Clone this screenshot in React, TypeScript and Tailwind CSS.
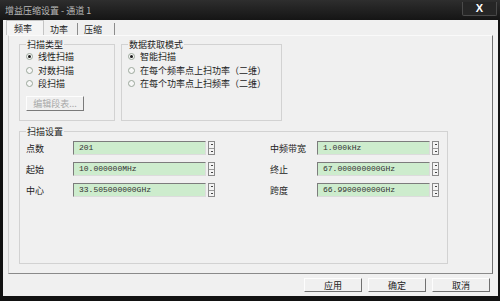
const cjk = "font-['Noto_Sans_CJK_SC','Noto_Sans',sans-serif]"

function Radio({ label, checked }: { label: string; checked?: boolean }) {
  return (
    <div className="h-[13.5px] flex items-center gap-[5px]">
      <span className="w-[7px] h-[7px] rounded-full border border-[#9aa79a] bg-[#f7f7f7] flex items-center justify-center">
        {checked && <span className="w-[3px] h-[3px] rounded-full bg-[#1a1a1a]" />}
      </span>
      <span className="text-[9px] leading-none text-[#222]">{label}</span>
    </div>
  )
}

function Spinner() {
  return (
    <div className="w-[7px] h-[14px] flex flex-col border border-[#8a8a8a] bg-[#f4f4f4]">
      <div className="flex-1 flex items-center justify-center border-b border-[#9a9a9a]">
        <span className="w-[2px] h-[1px] bg-[#444]" />
      </div>
      <div className="flex-1 flex items-center justify-center">
        <span className="w-[2px] h-[1px] bg-[#444]" />
      </div>
    </div>
  )
}

function Field({ label, value, inputW }: { label: string; value: string; inputW: string }) {
  return (
    <div className="flex items-center h-[14px]">
      <span className="w-[47px] text-[9px] leading-none text-[#222]">{label}</span>
      <div
        className={`${inputW} h-[14px] flex items-center pl-[5px] bg-[#cdeccd] border-t border-l border-t-[#7c7c7c] border-l-[#7c7c7c] border-b border-r border-b-[#dcdcdc] border-r-[#dcdcdc] font-['Liberation_Mono',monospace] text-[8px] text-[#333]`}
      >
        {value}
      </div>
      <div className="ml-[2px]">
        <Spinner />
      </div>
    </div>
  )
}

function DlgButton({ label }: { label: string }) {
  return (
    <button className="w-[58px] h-[14px] flex items-center justify-center bg-[#f0f0f0] border border-t-[#fdfdfd] border-l-[#fdfdfd] border-b-[#707070] border-r-[#707070] text-[9px] leading-none text-[#222]">
      {label}
    </button>
  )
}

export default function App() {
  return (
    <div className={`w-[500px] h-[301px] bg-[#121212] flex flex-col overflow-hidden ${cjk}`}>
      {/* Title bar */}
      <div className="h-[20px] flex items-center pl-[5px] pr-[3px] bg-gradient-to-b from-[#2e2e2e] to-[#151515]">
        <span className="text-[9px] leading-none text-[#b9b9b9]">增益压缩设置 - 通道 1</span>
        <div className="ml-auto w-[35px] h-[14px] mb-[3px] rounded-b-[2px] border border-t-0 border-[#4a4a4a] bg-[#262626] flex items-center justify-center">
          <span className="font-['Liberation_Sans',sans-serif] font-bold text-[11px] leading-none text-white">X</span>
        </div>
      </div>

      {/* Body */}
      <div className="flex-1 ml-[3px] mr-[2px] mb-[5px] bg-[#f0f0f0] flex flex-col">
        {/* Tabs */}
        <div className="h-[15px] flex items-end pl-[3px]">
          <div className="h-[15px] w-[38px] flex items-center pl-[7px] border border-b-0 border-[#c4c4c4] bg-[#f4f4f4] text-[9px] leading-none text-[#222]">
            频率
          </div>
          <div className="h-[12px] w-[34px] flex items-center pl-[6px] border-r border-[#8c8c8c] text-[9px] leading-none text-[#222]">
            功率
          </div>
          <div className="h-[12px] w-[37px] flex items-center pl-[6px] border-r border-[#8c8c8c] text-[9px] leading-none text-[#222]">
            压缩
          </div>
        </div>

        {/* Panel */}
        <div className="ml-[5px] mr-[5px] h-[239px] border border-t-[#fafafa] border-l-[#d0d0d0] border-r-[#707070] border-b-[#8a8a8a] pl-[10px] pt-[3px]">
          <div className="flex gap-[6px]">
            <fieldset className="w-[96px] h-[82px] border border-[#d2d2d2] px-[6px]">
              <legend className="px-[1px] text-[9px] leading-[11px] text-[#222]">扫描类型</legend>
              <div className="flex flex-col pt-[0px]">
                <Radio label="线性扫描" checked />
                <Radio label="对数扫描" />
                <Radio label="段扫描" />
              </div>
              <button className="mt-[5px] w-[58px] h-[15px] flex items-center justify-center border border-t-[#fdfdfd] border-l-[#fdfdfd] border-b-[#7a7a7a] border-r-[#7a7a7a] text-[9px] leading-none text-[#a8a8a8]">
                编辑段表...
              </button>
            </fieldset>
            <fieldset className="w-[161px] h-[82px] border border-[#d2d2d2] px-[6px]">
              <legend className="px-[1px] text-[9px] leading-[11px] text-[#222]">数据获取模式</legend>
              <div className="flex flex-col">
                <Radio label="智能扫描" checked />
                <Radio label="在每个频率点上扫功率（二维）" />
                <Radio label="在每个功率点上扫频率（二维）" />
              </div>
            </fieldset>
          </div>

          <fieldset className="mt-[5px] w-[429px] h-[138px] border border-[#d2d2d2] px-[6px]">
            <legend className="px-[1px] text-[9px] leading-[11px] text-[#222]">扫描设置</legend>
            <div className="flex pt-[4px]">
              <div className="flex flex-col gap-[7px]">
                <Field label="点数" value="201" inputW="w-[133px]" />
                <Field label="起始" value="10.000000MHz" inputW="w-[133px]" />
                <Field label="中心" value="33.505000000GHz" inputW="w-[133px]" />
              </div>
              <div className="ml-[55px] flex flex-col gap-[7px]">
                <Field label="中频带宽" value="1.000kHz" inputW="w-[113px]" />
                <Field label="终止" value="67.000000000GHz" inputW="w-[113px]" />
                <Field label="跨度" value="66.990000000GHz" inputW="w-[113px]" />
              </div>
            </div>
          </fieldset>
        </div>

        {/* Dialog buttons */}
        <div className="mt-[4px] flex justify-end gap-[6px] pr-[8px]">
          <DlgButton label="应用" />
          <DlgButton label="确定" />
          <DlgButton label="取消" />
        </div>
      </div>
    </div>
  )
}
